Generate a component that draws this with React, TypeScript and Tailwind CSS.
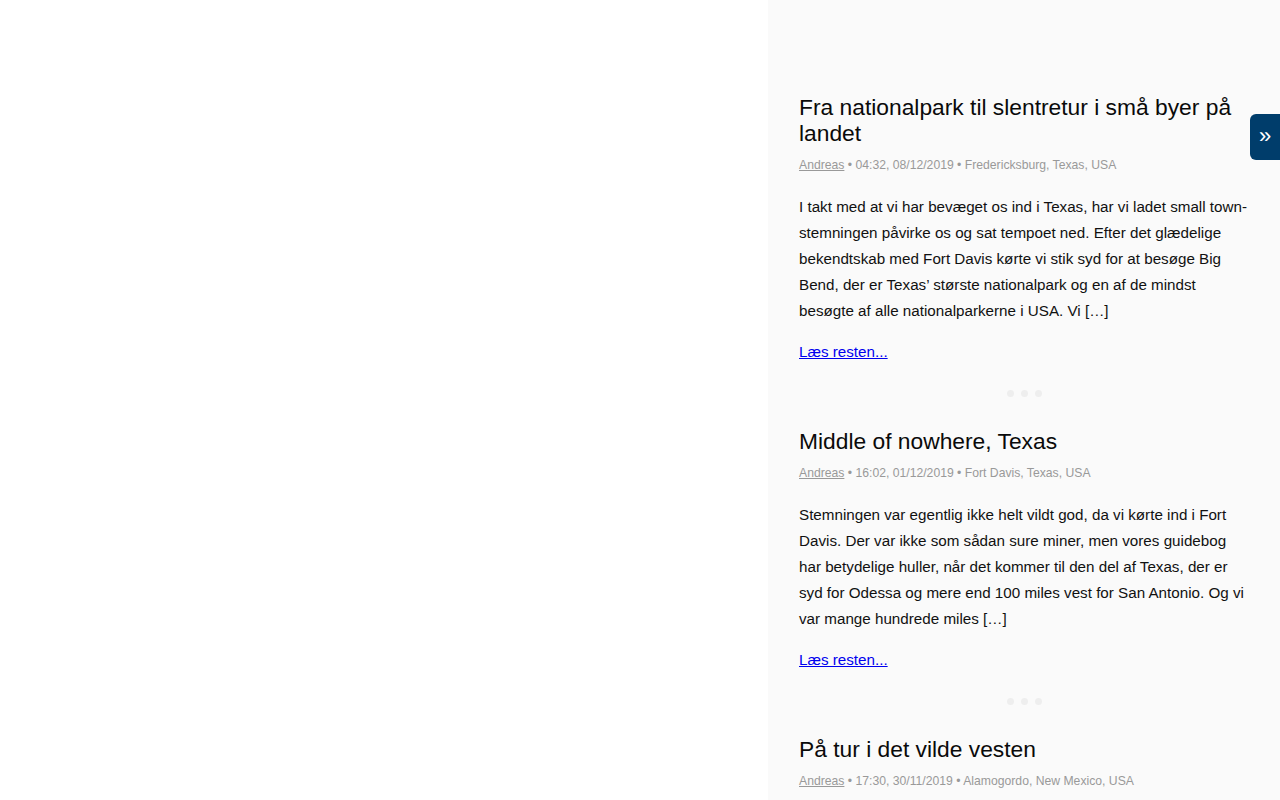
import React from 'react';

interface Post {
  title: string;
  time: string;
  place: string;
  excerpt?: string;
}

const posts: Post[] = [
  {
    title: 'Fra nationalpark til slentretur i små byer på landet',
    time: '04:32, 08/12/2019',
    place: 'Fredericksburg, Texas, USA',
    excerpt:
      'I takt med at vi har bevæget os ind i Texas, har vi ladet small town-stemningen påvirke os og sat tempoet ned. Efter det glædelige bekendtskab med Fort Davis kørte vi stik syd for at besøge Big Bend, der er Texas’ største nationalpark og en af de mindst besøgte af alle nationalparkerne i USA. Vi […]',
  },
  {
    title: 'Middle of nowhere, Texas',
    time: '16:02, 01/12/2019',
    place: 'Fort Davis, Texas, USA',
    excerpt:
      'Stemningen var egentlig ikke helt vildt god, da vi kørte ind i Fort Davis. Der var ikke som sådan sure miner, men vores guidebog har betydelige huller, når det kommer til den del af Texas, der er syd for Odessa og mere end 100 miles vest for San Antonio. Og vi var mange hundrede miles […]',
  },
  {
    title: 'På tur i det vilde vesten',
    time: '17:30, 30/11/2019',
    place: 'Alamogordo, New Mexico, USA',
    excerpt:
      'Efter et par dage i ørkenen fortsatte vi østpå mod de hvide klitter, og turen gik videre gennem New Mexico.',
  },
];

function Divider() {
  return (
    <div className="flex justify-center gap-[7px] pt-[25px] pb-[31px]">
      <span className="w-[7px] h-[7px] rounded-full bg-[#eeeeee]" />
      <span className="w-[7px] h-[7px] rounded-full bg-[#eeeeee]" />
      <span className="w-[7px] h-[7px] rounded-full bg-[#eeeeee]" />
    </div>
  );
}

function Article({ post }: { post: Post }) {
  return (
    <article>
      <h2 className="text-[22.8px] leading-[26px] text-[#0a0a0a] font-normal">{post.title}</h2>
      <div className="mt-[10px] text-[12.2px] leading-[18px] text-[#999999]">
        <a href="#" className="underline text-[#999999]">Andreas</a>
        {' • '}{post.time}{' • '}{post.place}
      </div>
      <p className="mt-[20px] text-[15.2px] leading-[26px] text-[#111111]">{post.excerpt}</p>
      <div className="mt-[15px] text-[15.2px] leading-[26px]">
        <a href="#" className="underline text-[#0000ee]">Læs resten...</a>
      </div>
    </article>
  );
}

export default function App() {
  return (
    <div className="flex h-[800px] overflow-hidden bg-white" style={{ fontFamily: '"Liberation Sans", Arial, sans-serif' }}>
      <main className="w-[768px] shrink-0" />
      <aside className="relative flex-1 bg-[#fafafa] pt-[94px] pl-[31px] pr-[30px]">
        {posts.map((post, i) => (
          <div key={i}>
            <Article post={post} />
            {i < posts.length - 1 && <Divider />}
          </div>
        ))}
        <button
          className="absolute right-0 top-[114px] w-[30px] h-[46px] rounded-l-[6px] bg-[#003d6b] text-white text-[22px] leading-none flex items-center justify-center pb-[3px]"
          aria-label="Toggle"
        >
          »
        </button>
      </aside>
    </div>
  );
}
